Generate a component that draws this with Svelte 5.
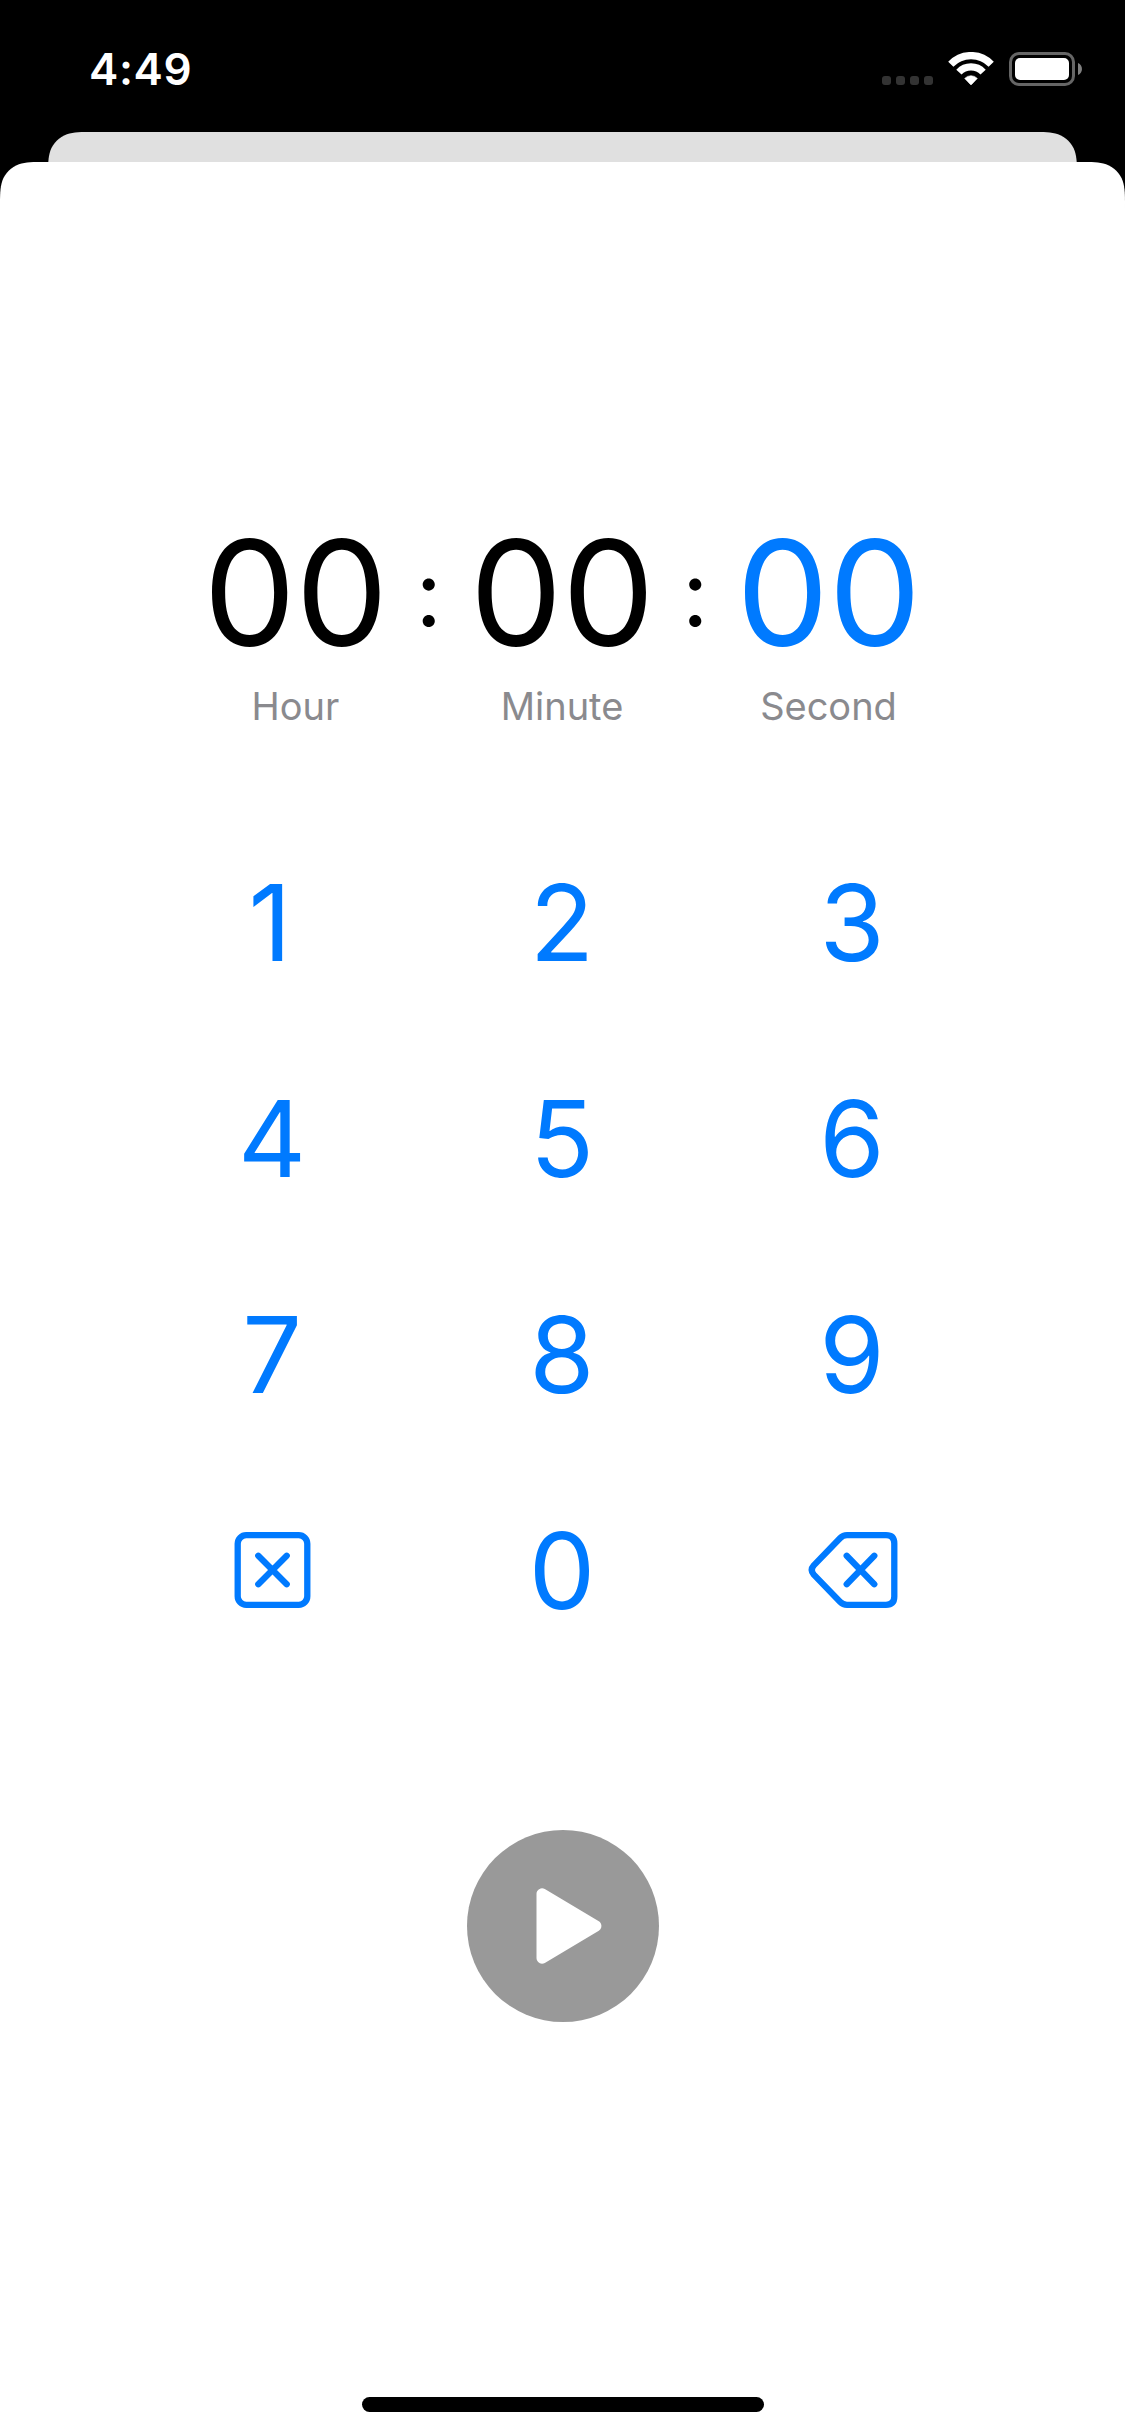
<script>
  const units = [
    { value: '00', label: 'Hour', active: false },
    { value: '00', label: 'Minute', active: false },
    { value: '00', label: 'Second', active: true }
  ];
  const keys = ['1', '2', '3', '4', '5', '6', '7', '8', '9', 'clear', '0', 'delete'];
</script>

<div class="screen">
  <header class="status">
    <span class="time">4:49</span>
    <div class="indicators">
      <div class="signal"><i></i><i></i><i></i><i></i></div>
      <svg class="wifi" width="46" height="34" viewBox="0 0 46 34">
        <g fill="none" stroke="#fff" stroke-width="7.2">
          <path d="M2.8 12.2A27.9 27.9 0 0 1 43.2 12.2" />
          <path d="M10.9 20.1A16.6 16.6 0 0 1 35.1 20.1" />
        </g>
        <path d="M16.7 26.4A8.7 8.7 0 0 1 29.3 26.4L23.6 32.4Q23 33.1 22.4 32.4Z" fill="#fff" stroke="#fff" stroke-width="0.6" stroke-linejoin="round" />
      </svg>
      <svg class="battery" width="73" height="34" viewBox="0 0 73 34">
        <rect x="1.5" y="1.5" width="63" height="31" rx="8.5" fill="none" stroke="#666" stroke-width="3" />
        <rect x="6" y="6" width="54" height="22" rx="5" fill="#fff" />
        <path d="M69 11C74.3 13.2 74.3 20.8 69 23Z" fill="#808080" />
      </svg>
    </div>
  </header>

  <div class="under-card"></div>

  <main class="sheet">
    <section class="timer">
      {#each units as unit, i}
        {#if i > 0}<span class="colon">:</span>{/if}
        <div class="unit">
          <span class="value" class:active={unit.active}>{unit.value}</span>
          <span class="label">{unit.label}</span>
        </div>
      {/each}
    </section>

    <section class="keypad">
      {#each keys as key}
        {#if key === 'clear'}
          <button aria-label="Clear">
            <svg width="90" height="76" viewBox="0 0 90 76">
              <rect x="9.7" y="3.2" width="69.6" height="69.6" rx="8.5" />
              <path d="M30.3 23.8 58.7 52.2M58.7 23.8 30.3 52.2" />
            </svg>
          </button>
        {:else if key === 'delete'}
          <button aria-label="Delete">
            <svg class="delete" width="90" height="76" viewBox="0 0 90 76">
              <path d="M39 3.2H78Q86.3 3.2 86.3 11.5V64.5Q86.3 72.8 78 72.8H39Q35 72.8 32 69.8L5.8 42.6Q1.7 38 5.8 33.4L32 6.2Q35 3.2 39 3.2Z" />
              <path d="M38.7 23.8 66.3 52.2M66.3 23.8 38.7 52.2" />
            </svg>
          </button>
        {:else}
          <button class="digit" class:one={key === '1'}>{key}</button>
        {/if}
      {/each}
    </section>

    <button class="play" aria-label="Start">
      <svg width="192" height="192" viewBox="0 0 192 192">
        <path d="M75 63.8V128.2L129 96Z" fill="#fff" stroke="#fff" stroke-width="11" stroke-linejoin="round" />
      </svg>
    </button>

    <div class="home"></div>
  </main>
</div>

<style>
  :global(body) {
    background: #000;
  }
  .screen {
    width: 1125px;
    height: 2436px;
    display: flex;
    flex-direction: column;
    background: #000;
    overflow: hidden;
    font-family: Inter, 'Liberation Sans', sans-serif;
  }
  .status {
    height: 132px;
    box-sizing: border-box;
    padding: 6px 43px 0 89px;
    display: flex;
    align-items: center;
    justify-content: space-between;
  }
  .time {
    color: #fff;
    font-size: 44px;
    line-height: 60px;
    font-weight: 600;
    letter-spacing: 0.6px;
  }
  .indicators {
    display: flex;
    align-items: flex-end;
  }
  .signal {
    display: flex;
    gap: 5px;
    margin-right: 15px;
    margin-bottom: 1px;
  }
  .signal i {
    width: 9px;
    height: 9px;
    border-radius: 3px;
    background: #333;
  }
  .wifi {
    margin-right: 15px;
  }
  .under-card {
    height: 30px;
    margin: 0 48px;
    background: #e0e0e0;
    clip-path: path('M0 45.86C0 32.65 0 26.05 2.25 18.94C5.07 11.18 11.18 5.07 18.94 2.25C26.05 0 32.65 0 45.86 0H983.14C996.35 0 1002.95 0 1010.06 2.25C1017.82 5.07 1023.93 11.18 1026.75 18.94C1029 26.05 1029 32.65 1029 45.86Z');
  }
  .sheet {
    flex: 1;
    box-sizing: border-box;
    padding: 356px 0 24px;
    display: flex;
    flex-direction: column;
    align-items: center;
    background: #fff;
    clip-path: path('M0 45.86C0 32.65 0 26.05 2.25 18.94C5.07 11.18 11.18 5.07 18.94 2.25C26.05 0 32.65 0 45.86 0H1079.14C1092.35 0 1098.95 0 1106.06 2.25C1113.82 5.07 1119.93 11.18 1122.75 18.94C1125 26.05 1125 32.65 1125 45.86V2274H0Z');
  }
  .timer {
    display: flex;
    align-items: flex-start;
    padding-right: 1px;
  }
  .unit {
    width: 182px;
    display: flex;
    flex-direction: column;
    align-items: center;
  }
  .value {
    font-size: 147px;
    line-height: 150px;
    letter-spacing: -0.6px;
    color: #000;
  }
  .value.active {
    color: #007aff;
  }
  .label {
    margin-top: 14px;
    font-size: 38px;
    line-height: 48px;
    color: #8a8a8e;
  }
  .colon {
    width: 84.5px;
    text-align: center;
    font-size: 92px;
    line-height: 150px;
  }
  .keypad {
    margin-top: 84px;
    display: grid;
    grid-template-columns: repeat(3, 290px);
    grid-auto-rows: 216px;
  }
  button {
    appearance: none;
    border: 0;
    padding: 0;
    background: none;
    display: flex;
    align-items: center;
    justify-content: center;
    font: inherit;
  }
  .digit {
    padding-right: 1px;
    font-size: 105.5px;
    color: #007aff;
  }
  .digit.one {
    padding-right: 5px;
  }
  .keypad svg {
    fill: none;
    stroke: #007aff;
    stroke-width: 6.3px;
    stroke-linecap: round;
    stroke-linejoin: round;
  }
  .play {
    margin-top: 152px;
    width: 192px;
    height: 192px;
    border-radius: 50%;
    background: #999;
  }
  .home {
    margin-top: auto;
    width: 402px;
    height: 15px;
    border-radius: 8px;
    background: #000;
  }
</style>
